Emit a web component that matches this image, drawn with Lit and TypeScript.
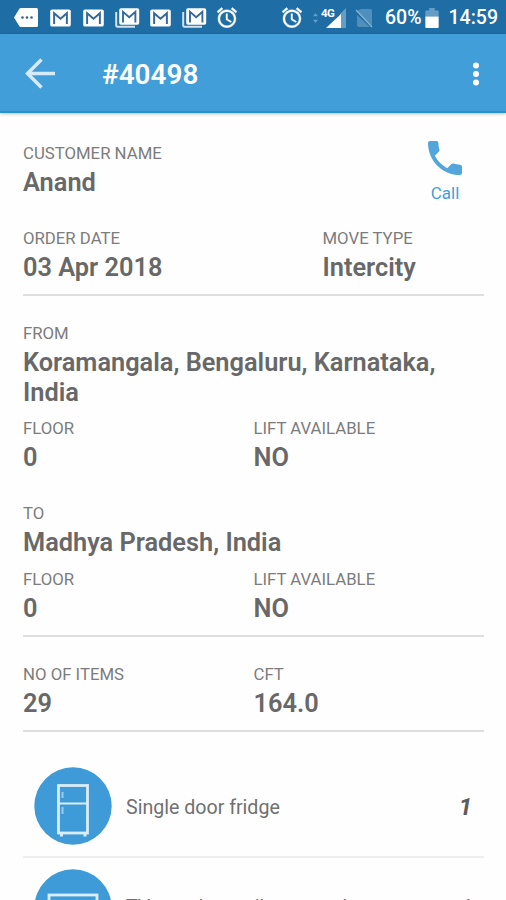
import { LitElement, html, svg, css } from "lit";
import { customElement, property } from "lit/decorators.js";

const mailShape = svg`
  <rect x="0.2" y="0.2" width="20" height="16.6" rx="1.8" fill="#fff"/>
  <path d="M4 14.4V3.8l6.2 5.4 6.2-5.4v10.6" fill="none" stroke="#35689a" stroke-width="1.9"/>`;
const mail = html`<svg class="mail" width="21" height="18" viewBox="0 0 20.4 17">${mailShape}</svg>`;
const mailStack = html`<svg class="stack" width="25" height="20" viewBox="0 0 25 20">
  <path d="M1.2 4v13.6q0 1.2 1.2 1.2H20" fill="none" stroke="#d3e3ef" stroke-width="2"/>
  <g transform="translate(4 0)">${mailShape}</g></svg>`;
const alarm = html`<svg width="20" height="21" viewBox="2 1.6 20 20.4" fill="#fff">
  <path stroke="#fff" stroke-width=".4" d="M22 5.72l-4.6-3.86-1.29 1.53 4.6 3.86L22 5.72zM7.88 3.39L6.6 1.86 2 5.71l1.29 1.53 4.59-3.85zM12.5 8H11v6l4.75 2.85.75-1.23-4-2.37V8zM12 4c-4.97 0-9 4.03-9 9s4.02 9 9 9a9 9 0 0 0 0-18zm0 16c-3.87 0-7-3.13-7-7s3.13-7 7-7 7 3.13 7 7-3.13 7-7 7z"/></svg>`;

@customElement("status-bar")
class StatusBar extends LitElement {
  static styles = css`
    :host { display: flex; justify-content: space-between; height: 34px; box-sizing: border-box;
      padding: 0 8px 0 14px; background: #1e6da4; color: #fff; }
    .group { display: flex; align-items: center; height: 35px; }
    svg { display: block; flex: none; }
    .notes { gap: 12px; }
    .notes .stack { margin: 0 -2px 0 -1px; }
    .text { font-size: 19.5px; line-height: 37px; font-weight: 500; white-space: nowrap; }
    .arrows { margin-left: 11px; }
    .signal { margin-left: 2px; }
    .nosim { margin-left: 8px; margin-right: 12px; }
    .battery { margin-left: 3px; margin-right: 10px; }
    .net { font: 700 11.5px Roboto, sans-serif; fill: #fff; letter-spacing: -0.5px; }
  `;
  render() {
    return html`
      <div class="group notes">
        <svg width="24" height="19" viewBox="0 0 24 19"><path d="M7 0h15.5q1.5 0 1.5 1.5v16q0 1.5-1.5 1.5H7q-1 0-1.6-.8L0 9.5 5.4.8Q6 0 7 0z" fill="#fff"/><g fill="#35658f"><circle cx="8.5" cy="9.5" r="1.3"/><circle cx="13" cy="9.5" r="1.3"/><circle cx="17.5" cy="9.5" r="1.3"/></g></svg>
        ${mail}${mail}${mailStack}${mail}${mailStack}
        <span>${alarm}</span>
      </div>
      <div class="group">
        ${alarm}
        <svg class="arrows" width="5" height="12" viewBox="0 0 6 12" fill="#659dc4"><path d="M0 4l3-4 3 4zM0 8h6l-3 4z"/></svg>
        <svg class="signal" width="27" height="22" viewBox="0 0 27 22">
          <path d="M20 21V7L26 1V21z" fill="#659dc4"/><path d="M6 21L21 7V21z" fill="#fff"/>
          <text class="net" x="1" y="10">4G</text></svg>
        <svg class="nosim" width="18" height="20" viewBox="0 0 18 20"><path d="M6 1h9q2 0 2 2v15L2 3zM2 7v10q0 2 2 2h11z" fill="#4f8fbb"/><path d="M1 2l16 17" stroke="#8ab5d2" stroke-width="1.3"/></svg>
        <span class="text">60%</span>
        <svg class="battery" width="14" height="20" viewBox="0 0 14 21"><path d="M0 9V3.5q0-1 1-1h3V0h6v2.5h3q1 0 1 1V9z" fill="#659dc4"/><path d="M0 9h14v11q0 1-1 1H1q-1 0-1-1z" fill="#fff"/></svg>
        <span class="text">14:59</span>
      </div>`;
  }
}

@customElement("labelled-value")
class LabelledValue extends LitElement {
  @property() label = "";
  @property() value = "";
  static styles = css`
    :host { display: block; }
    .label { font-size: 16.75px; line-height: 18px; color: #7c7c7c; font-weight: 400; }
    .value { margin-top: 6px; font-size: 25.35px; line-height: 29.5px; font-weight: 600; color: #686868; }
  `;
  render() {
    return html`<div class="label">${this.label}</div><div class="value">${this.value}</div>`;
  }
}

const fridge = svg`<g fill="none" stroke="#d9ecf8" stroke-width="2.8">
  <rect x="24.5" y="18.5" width="29" height="47.5"/><path d="M24 36.5h30" stroke-width="2"/></g>
  <path d="M28.5 25v6M28.5 40v7" stroke="#9dcdee" stroke-width="2"/><path d="M27.5 66v3.5M51 66v3.5" stroke="#d9ecf8" stroke-width="3"/>`;
const television = svg`<rect x="15" y="26" width="48" height="30" fill="none" stroke="#d9ecf8" stroke-width="2.8"/><path d="M28 64h22" stroke="#d9ecf8" stroke-width="2.8"/>`;

@customElement("inventory-row")
class InventoryRow extends LitElement {
  @property() name = "";
  @property() count = "";
  @property({ attribute: false }) art: unknown;
  static styles = css`
    :host { display: flex; align-items: center; height: 102px; box-sizing: border-box;
      padding: 0 12px 0 11px; border-bottom: 2px solid #eee; }
    svg { display: block; flex: none; }
    .name { flex: 1; margin-left: 14px; font-size: 19.6px; line-height: 24px; color: #707070; margin-top: 3px; white-space: nowrap; }
    .count { font-size: 24px; line-height: 28px; font-weight: 700; font-style: italic; color: #5c5c5c; margin-top: 2px; }
    :host(:last-child) .name, :host(:last-child) .count { margin-top: -1px; }
  `;
  render() {
    return html`<svg width="78" height="78" viewBox="0 0 78 78"><circle cx="39" cy="39" r="38.7" fill="#3e9bd7"/>${this.art}</svg>
      <span class="name">${this.name}</span><span class="count">${this.count}</span>`;
  }
}

@customElement("app-root")
class AppRoot extends LitElement {
  static styles = css`
    :host { display: block; width: 506px; height: 900px; overflow: hidden; background: #fefefe;
      font-family: Roboto, "Liberation Sans", sans-serif; }
    .toolbar { display: flex; align-items: center; height: 79px; box-sizing: border-box; background: #429ed9;
      border-bottom: 2px solid #2792cf; padding: 2px 27px 0 25px; color: #fff;
      box-shadow: 0 1px 3px rgba(0,0,0,.25); }
    .toolbar svg { display: block; }
    .title { flex: 1; margin-left: 47px; font-size: 27.9px; line-height: 32px; font-weight: 600; margin-top: 2px; }
    .content { padding: 0 22px 0 23px; }
    .row { display: flex; }
    .customer { padding-top: 31px; justify-content: space-between; }
    .call { display: flex; flex-direction: column; align-items: center; width: 34px; margin: -3px 22px 0 0;
      font-size: 17px; line-height: 20px; color: #429ed9; }
    .call svg { display: block; margin-bottom: 8px; }
    .order { padding-top: 26px; padding-bottom: 11.5px; }
    .order > :first-child { width: 299.5px; }
    .half > :first-child { width: 230.5px; }
    .rule { height: 2px; background: #dedede; }
    .from { padding-top: 28px; }
    .half { padding-top: 12px; }
    .to { padding-top: 31px; }
    .end { padding-top: 13px; padding-bottom: 11.5px; }
    .totals { padding-top: 28px; padding-bottom: 11.5px; }
    .items { padding-top: 24px; }
  `;
  render() {
    return html`
      <status-bar></status-bar>
      <header class="toolbar">
        <svg width="30" height="31" viewBox="0 0 30 31"><path d="M30 15.5H3M16.5 1.5L2.5 15.5l14 14" fill="none" stroke="#d5eafa" stroke-width="3.4"/></svg>
        <span class="title">#40498</span>
        <svg width="6" height="24" viewBox="0 0 6 24" fill="#fff"><circle cx="3" cy="3.5" r="3"/><circle cx="3" cy="12" r="3"/><circle cx="3" cy="20.5" r="3"/></svg>
      </header>
      <main class="content">
        <div class="row customer">
          <labelled-value label="CUSTOMER NAME" value="Anand"></labelled-value>
          <div class="call">
            <svg width="34" height="34" viewBox="3 3 18 18"><path fill="#52a6dc" d="M6.62 10.79c1.44 2.83 3.76 5.14 6.59 6.59l2.2-2.2c.27-.27.67-.36 1.02-.24 1.12.37 2.33.57 3.57.57.55 0 1 .45 1 1V20c0 .55-.45 1-1 1-9.39 0-17-7.61-17-17 0-.55.45-1 1-1h3.5c.55 0 1 .45 1 1 0 1.25.2 2.45.57 3.57.11.35.03.74-.25 1.02l-2.2 2.2z"/></svg>
            Call
          </div>
        </div>
        <div class="row order">
          <labelled-value label="ORDER DATE" value="03 Apr 2018"></labelled-value>
          <labelled-value label="MOVE TYPE" value="Intercity"></labelled-value>
        </div>
        <div class="rule"></div>
        <labelled-value class="from" label="FROM" value="Koramangala, Bengaluru, Karnataka, India"></labelled-value>
        <div class="row half">
          <labelled-value label="FLOOR" value="0"></labelled-value>
          <labelled-value label="LIFT AVAILABLE" value="NO"></labelled-value>
        </div>
        <labelled-value class="to" label="TO" value="Madhya Pradesh, India"></labelled-value>
        <div class="row half end">
          <labelled-value label="FLOOR" value="0"></labelled-value>
          <labelled-value label="LIFT AVAILABLE" value="NO"></labelled-value>
        </div>
        <div class="rule"></div>
        <div class="row half totals">
          <labelled-value label="NO OF ITEMS" value="29"></labelled-value>
          <labelled-value label="CFT" value="164.0"></labelled-value>
        </div>
        <div class="rule"></div>
        <div class="items">
          <inventory-row name="Single door fridge" count="1" .art=${fridge}></inventory-row>
          <inventory-row name="TV wooden wall mounted" count="1" .art=${television}></inventory-row>
        </div>
      </main>`;
  }
}
